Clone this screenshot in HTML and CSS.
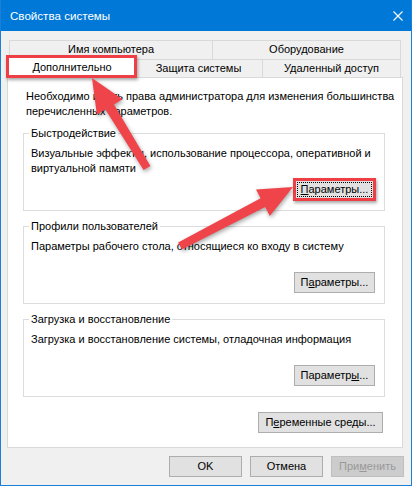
FILE: index.html
```html
<!DOCTYPE html>
<html lang="ru">
<head>
<meta charset="utf-8">
<title>Свойства системы</title>
<link rel="stylesheet" href="styles.css">
</head>
<body>
<div class="window">
  <div class="titlebar">
    <span class="title">Свойства системы</span>
    <svg class="close" width="10" height="10" viewBox="0 0 10 10"><path d="M0.5 0.5L9.5 9.5M9.5 0.5L0.5 9.5" stroke="#fff" stroke-width="1.1" fill="none"/></svg>
  </div>
  <div class="content">
    <div class="tabs">
      <div class="tabrow row1">
        <div class="tab w-name">Имя компьютера</div>
        <div class="tab w-hw">Оборудование</div>
      </div>
      <div class="tabrow row2">
        <div class="tab w-adv selected">Дополнительно</div>
        <div class="tab w-prot">Защита системы</div>
        <div class="tab w-remote">Удаленный доступ</div>
      </div>
    </div>
    <div class="panel">
      <p class="intro">Необходимо иметь права администратора для изменения большинства<br>перечисленных параметров.</p>
      <fieldset class="group">
        <legend>Быстродействие</legend>
        <p class="desc">Визуальные эффекты, использование процессора, оперативной и<br>виртуальной памяти</p>
        <div class="btnrow"><button class="btn btn-param focused"><u>П</u>араметры...</button></div>
      </fieldset>
      <fieldset class="group">
        <legend>Профили пользователей</legend>
        <p class="desc">Параметры рабочего стола, относящиеся ко входу в систему</p>
        <div class="btnrow"><button class="btn btn-param">П<u>а</u>раметры...</button></div>
      </fieldset>
      <fieldset class="group">
        <legend>Загрузка и восстановление</legend>
        <p class="desc">Загрузка и восстановление системы, отладочная информация</p>
        <div class="btnrow"><button class="btn btn-param">Параметр<u>ы</u>...</button></div>
      </fieldset>
      <div class="btnrow env"><button class="btn btn-env">П<u>е</u>ременные среды...</button></div>
    </div>
    <div class="dialog-buttons">
      <button class="btn btn-dlg">OK</button>
      <button class="btn btn-dlg">Отмена</button>
      <button class="btn btn-dlg disabled">При<u>м</u>енить</button>
    </div>
  </div>
  <div class="mark mark-tab"></div>
  <div class="mark mark-btn"></div>
  <svg class="arrows" width="412" height="486" viewBox="0 0 412 486">
    <polygon points="92,78 122.5,99.2 114,104.4 150.4,165.9 143.6,170.1 105.4,109.6 96.9,114.8" fill="#ef4449"/>
    <polygon points="293,187 269.8,216 265.2,207.1 181.9,249.5 178.1,242.5 260.6,198.3 256,189.4" fill="#ef4449"/>
  </svg>
</div>
</body>
</html>
```
FILE: styles.css
```css
* { box-sizing: border-box; }
html, body { margin: 0; padding: 0; }
body {
  background: #ffffff;
  font-family: "Liberation Sans", Arial, sans-serif;
  font-size: 11px;
  color: #000;
}
.window {
  position: relative;
  width: 412px;
  height: 486px;
  background: #f0f0f0;
  border: 1px solid #1a7fd6;
  border-top: none;
  overflow: hidden;
}
.titlebar {
  height: 31px;
  background: #0078d7;
  color: #fff;
  display: flex;
  align-items: center;
  justify-content: space-between;
  padding: 0 8px 0 9px;
}
.title { font-size: 11.6px; line-height: 15px; }
.close { display: block; }

.content { padding: 9px 0 0 6px; }

.tabs { margin-left: 2px; width: 392px; }
.tabrow { display: flex; align-items: flex-start; }
.tab {
  flex: none;
  border: 1px solid #d9d9d9;
  border-left: none;
  border-bottom: none;
  background: #f0f0f0;
  text-align: center;
  white-space: nowrap;
}
.tab:first-child { border-left: 1px solid #d9d9d9; }
.row1 .tab { height: 19px; line-height: 17px; }
.row2 .tab { height: 18px; line-height: 16px; }
.row2 .tab.selected {
  position: relative;
  z-index: 1;
  height: 21px;
  line-height: 18px;
  margin: -2px -2px -1px;
  background: #fff;
  border-left: 1px solid #d9d9d9;
}
.w-name { width: 204px; }
.w-hw { width: 188px; }
.w-adv { width: 130px; }
.w-prot { width: 128px; }
.w-remote { width: 138px; }

.panel {
  width: 396px;
  height: 371px;
  background: #fff;
  border: 1px solid #d9d9d9;
  padding: 11px 17px 0 15px;
}
.intro { margin: 0 0 0 3px; line-height: 15px; white-space: nowrap; }

.group {
  margin: 7px 0 0;
  padding: 0 9px 10px 5px;
  border: 1px solid #dcdcdc;
  min-width: 0;
}
.group + .group { margin-top: 8px; }
.group legend { padding: 0 2px; line-height: 15px; }
.desc { margin: 5px 0 0 2px; line-height: 15px; height: 30px; white-space: nowrap; }
.btnrow { display: flex; justify-content: flex-end; margin-top: 3px; }
.btnrow.env { margin-top: 15px; margin-right: 2px; }

.btn {
  height: 21px;
  padding: 0;
  background: #e1e1e1;
  border: 1px solid #adadad;
  border-radius: 0;
  font-family: "Liberation Sans", Arial, sans-serif;
  font-size: 11px;
  line-height: 19px;
  color: #000;
  white-space: nowrap;
}
.btn u { text-underline-offset: 1px; }
.btn-param { width: 81px; }
.btn-env { width: 125px; }
.btn-dlg { width: 73px; }
.btn.focused { outline: 1px dotted #000; outline-offset: -4px; }
.btn.disabled { background: #cccccc; border-color: #bfbfbf; color: #999999; }

.dialog-buttons {
  display: flex;
  justify-content: flex-end;
  gap: 8px;
  margin-top: 8px;
  padding-right: 7px;
}

.mark {
  position: absolute;
  border: 3px solid #ee3f46;
  box-shadow: 1px 2px 3px rgba(0, 0, 0, 0.35);
  z-index: 2;
}
.mark-tab { left: 5px; top: 55px; width: 131px; height: 23px; }
.mark-btn { left: 292px; top: 178px; width: 83px; height: 23px; }

.arrows {
  position: absolute;
  left: -1px;
  top: 0;
  z-index: 3;
  filter: drop-shadow(1px 2px 2px rgba(0, 0, 0, 0.35));
}
```
